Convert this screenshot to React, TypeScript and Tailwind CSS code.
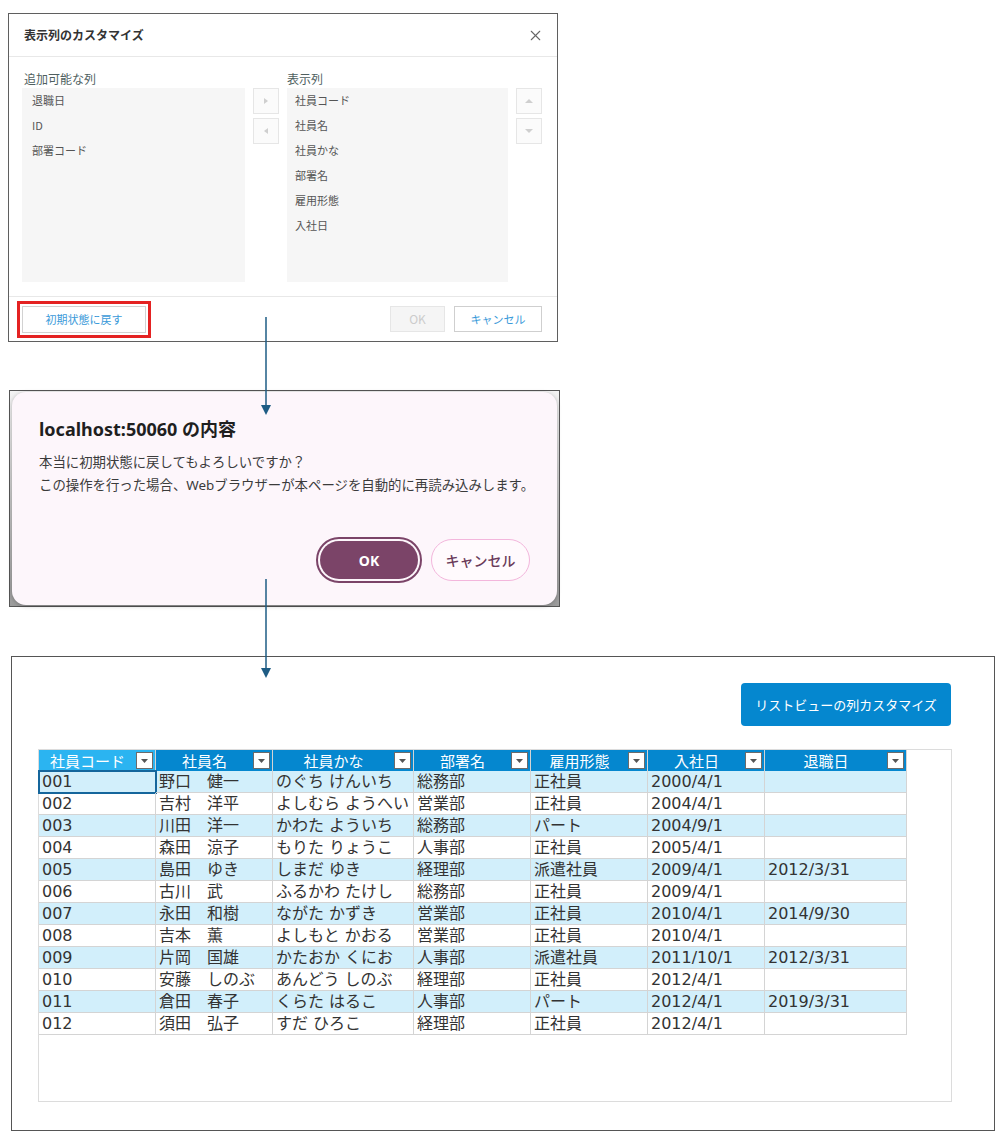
import { X } from 'lucide-react';

const jp = '"Noto Sans CJK JP", "Noto Sans", sans-serif';
const grid = '"DejaVu Sans", "Noto Sans CJK JP", sans-serif';

const available = ['退職日', 'ID', '部署コード'];
const shown = ['社員コード', '社員名', '社員かな', '部署名', '雇用形態', '入社日'];

const columns = [
  { title: '社員コード', width: 'w-[117px]' },
  { title: '社員名', width: 'w-[117px]' },
  { title: '社員かな', width: 'w-[141px]' },
  { title: '部署名', width: 'w-[117px]' },
  { title: '雇用形態', width: 'w-[117px]' },
  { title: '入社日', width: 'w-[117px]' },
  { title: '退職日', width: 'w-[142px]' },
];

const rows = [
  ['001', '野口　健一', 'のぐち けんいち', '総務部', '正社員', '2000/4/1', ''],
  ['002', '吉村　洋平', 'よしむら ようへい', '営業部', '正社員', '2004/4/1', ''],
  ['003', '川田　洋一', 'かわた よういち', '総務部', 'パート', '2004/9/1', ''],
  ['004', '森田　涼子', 'もりた りょうこ', '人事部', '正社員', '2005/4/1', ''],
  ['005', '島田　ゆき', 'しまだ ゆき', '経理部', '派遣社員', '2009/4/1', '2012/3/31'],
  ['006', '古川　武', 'ふるかわ たけし', '総務部', '正社員', '2009/4/1', ''],
  ['007', '永田　和樹', 'ながた かずき', '営業部', '正社員', '2010/4/1', '2014/9/30'],
  ['008', '吉本　薫', 'よしもと かおる', '営業部', '正社員', '2010/4/1', ''],
  ['009', '片岡　国雄', 'かたおか くにお', '人事部', '派遣社員', '2011/10/1', '2012/3/31'],
  ['010', '安藤　しのぶ', 'あんどう しのぶ', '経理部', '正社員', '2012/4/1', ''],
  ['011', '倉田　春子', 'くらた はるこ', '人事部', 'パート', '2012/4/1', '2019/3/31'],
  ['012', '須田　弘子', 'すだ ひろこ', '経理部', '正社員', '2012/4/1', ''],
];

function Tri({ dir }: { dir: 'right' | 'left' | 'up' | 'down' }) {
  const pts = {
    right: '2,1 6,4 2,7',
    left: '6,1 2,4 6,7',
    up: '0,6 4,2 8,6',
    down: '0,2 4,6 8,2',
  }[dir];
  return (
    <svg width="8" height="8" viewBox="0 0 8 8">
      <polygon points={pts} fill="#cfcfcf" />
    </svg>
  );
}

function SideButton({ dir }: { dir: 'right' | 'left' | 'up' | 'down' }) {
  return (
    <div className="w-[26px] h-[26px] border border-[#e6e6e6] bg-[#fbfbfb] flex items-center justify-center">
      <Tri dir={dir} />
    </div>
  );
}

function Arrow({ top, height }: { top: number; height: number }) {
  return (
    <svg
      className="absolute left-[260px]"
      style={{ top, height }}
      width="12"
      height={height}
      viewBox={`0 0 12 ${height}`}
    >
      <line x1="6" y1="0" x2="6" y2={height - 8} stroke="#1e5c84" strokeWidth="1.5" />
      <polygon points={`1,${height - 10} 11,${height - 10} 6,${height}`} fill="#1e5c84" />
    </svg>
  );
}

function CustomizeDialog() {
  return (
    <div className="ml-[8px] w-[550px] h-[329px] border border-[#5f5f5f] bg-white flex flex-col" style={{ fontFamily: jp }}>
      <div className="h-[43px] shrink-0 flex items-center justify-between pl-[15px] pr-[13px] border-b border-[#e8e8e8]">
        <span className="text-[12px] font-bold text-[#333]">表示列のカスタマイズ</span>
        <X className="w-[17px] h-[17px] text-[#666]" strokeWidth={1.5} />
      </div>
      <div className="h-[239px] shrink-0 px-[13px] pt-[14px] grid grid-cols-[223px_26px_221px_26px] grid-rows-[16px_194px] gap-x-2 gap-y-[1px]">
        <div className="pl-[2px] text-[12px] leading-[16px] text-[#4f5f5f]">追加可能な列</div>
        <div />
        <div className="text-[12px] leading-[16px] text-[#4f5f5f]">表示列</div>
        <div />
        <div className="bg-[#f6f6f6] pl-[10px]">
          {available.map((a) => (
            <div key={a} className="h-[25px] leading-[25px] text-[11px] text-[#555]">
              {a}
            </div>
          ))}
        </div>
        <div className="flex flex-col gap-1">
          <SideButton dir="right" />
          <SideButton dir="left" />
        </div>
        <div className="bg-[#f6f6f6] pl-[8px]">
          {shown.map((a) => (
            <div key={a} className="h-[25px] leading-[25px] text-[11px] text-[#555]">
              {a}
            </div>
          ))}
        </div>
        <div className="flex flex-col gap-1">
          <SideButton dir="up" />
          <SideButton dir="down" />
        </div>
      </div>
      <div className="flex-1 border-t border-[#e8e8e8] flex items-center pl-[8px] pr-[15px]">
        <div className="border-[3px] border-[#e42222] p-[2px]">
          <div className="w-[124px] h-[27px] border border-[#d2d2d2] bg-white flex items-center justify-center text-[11px] text-[#3a9ad9]">
            初期状態に戻す
          </div>
        </div>
        <div className="ml-auto w-[55px] h-[26px] border border-[#e6e6e6] bg-[#f5f5f5] flex items-center justify-center text-[12px] text-[#cccccc]">
          OK
        </div>
        <div className="ml-[9px] w-[88px] h-[26px] border border-[#cfcfcf] bg-white flex items-center justify-center text-[11px] text-[#3a9ad9]">
          キャンセル
        </div>
      </div>
    </div>
  );
}

function ConfirmDialog() {
  return (
    <div className="mt-[48px] ml-[9px] w-[551px] h-[217px] border border-[#555] bg-linear-to-b from-[#f3f3f3] to-[#9c9c9c] px-[2px] py-[1px]">
      <div
        className="h-full rounded-[14px] bg-[#fdf6fb] shadow-[0_1px_4px_rgba(0,0,0,0.25)] flex flex-col pt-[25px] pb-[24px] pl-[27px] pr-[20px]"
        style={{ fontFamily: '"Noto Sans", "Noto Sans CJK JP", sans-serif' }}
      >
        <div className="text-[18px] leading-[24px] font-bold text-[#1f1f1f]">localhost:50060 の内容</div>
        <div className="mt-[10px] text-[13.4px] leading-[23px] text-[#3b3b3b] whitespace-nowrap">
          <div>本当に初期状態に戻してもよろしいですか？</div>
          <div>この操作を行った場合、Webブラウザーが本ページを自動的に再読み込みします。</div>
        </div>
        <div className="mt-auto pr-[7px] flex items-center justify-end">
          <div className="w-[98px] h-[38px] rounded-full bg-[#7b4468] outline-2 outline-offset-2 outline-[#7b4468] flex items-center justify-center text-[14px] font-bold text-white">
            OK
          </div>
          <div className="ml-[13px] w-[99px] h-[42px] rounded-full border border-[#f3b6dc] bg-[#fffafd] flex items-center justify-center text-[14px] font-medium text-[#6a3a5a]">
            キャンセル
          </div>
        </div>
      </div>
    </div>
  );
}

function ListView() {
  return (
    <div className="mt-[49px] ml-[11px] w-[984px] h-[475px] border border-[#555] bg-white flex flex-col pt-[26px] pl-[26px] pr-[43px]">
      <div className="flex justify-end">
        <div
          className="w-[210px] h-[43px] rounded-[4px] bg-[#0587cf] flex items-center justify-center text-[13px] text-white"
          style={{ fontFamily: jp }}
        >
          リストビューの列カスタマイズ
        </div>
      </div>
      <div className="mt-[23px] w-[914px] h-[353px] border border-[#dcdcdc]" style={{ fontFamily: grid }}>
        <div className="flex w-fit h-[21px]">
          {columns.map((c, i) => (
            <div
              key={c.title}
              className={`${c.width} ${i === 0 ? 'bg-[#2bb4f1]' : 'bg-[#0587cf]'} border-r border-[#d4d4d4] flex items-center pr-[2px]`}
            >
              <span className="flex-1 text-center text-[15px] leading-[21px] text-white" style={{ fontFamily: jp }}>
                {c.title}
              </span>
              <span className="w-[17px] h-[17px] border border-[#6b6b6b] bg-white flex items-center justify-center">
                <svg width="7" height="4" viewBox="0 0 7 4">
                  <polygon points="0,0 7,0 3.5,4" fill="#555" />
                </svg>
              </span>
            </div>
          ))}
        </div>
        {rows.map((r, ri) => (
          <div key={r[0]} className={`flex w-fit h-[22px] ${ri % 2 === 0 ? 'bg-[#d2effb]' : 'bg-white'}`}>
            {r.map((v, ci) => (
              <div
                key={ci}
                className={`${columns[ci].width} border-r border-b border-[#d4d4d4] pl-[3px] text-[16px] leading-[21px] text-[#333] whitespace-nowrap overflow-hidden ${
                  ri === 0 && ci === 0 ? 'outline-2 -outline-offset-1 outline-[#15669c]' : ''
                }`}
              >
                {v}
              </div>
            ))}
          </div>
        ))}
      </div>
    </div>
  );
}

export default function App() {
  return (
    <div className="relative min-h-screen w-[1000px] bg-white pt-[13px] pb-[8px]">
      <CustomizeDialog />
      <ConfirmDialog />
      <ListView />
      <Arrow top={317} height={98} />
      <Arrow top={579} height={99} />
    </div>
  );
}
